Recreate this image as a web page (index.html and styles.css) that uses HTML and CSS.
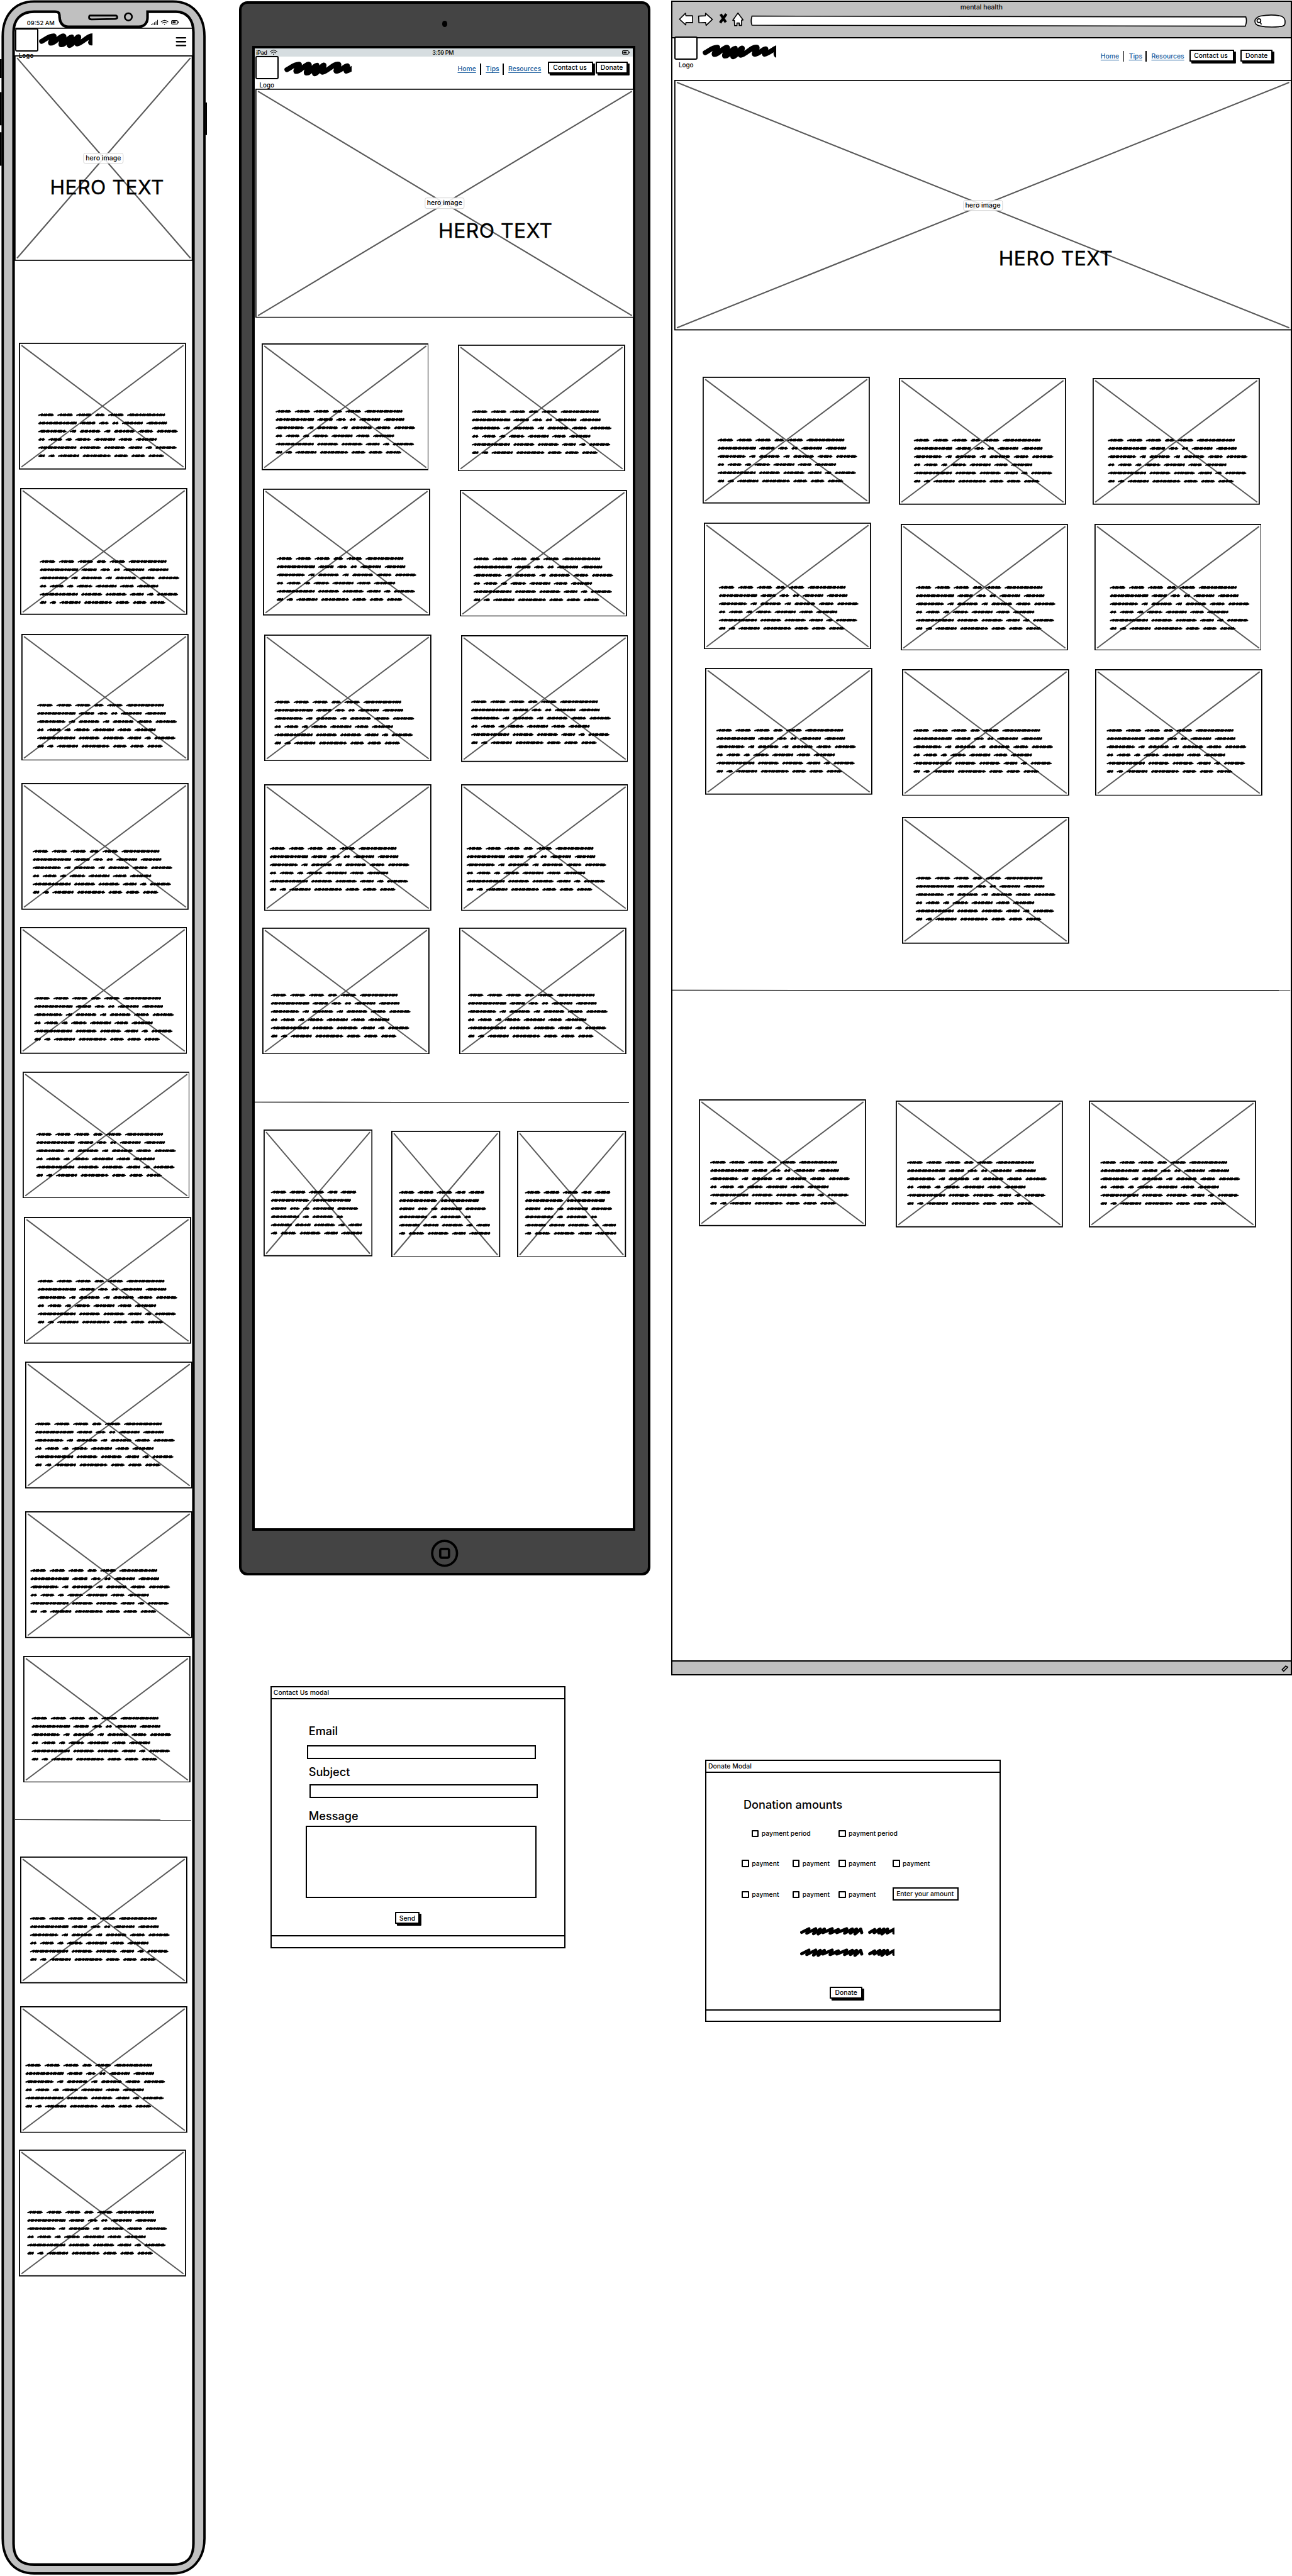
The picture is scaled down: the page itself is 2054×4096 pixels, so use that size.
FILE: index.html
```html
<!DOCTYPE html>
<html lang="en">
<head>
<meta charset="utf-8">
<title>mental health</title>
<link rel="stylesheet" href="styles.css">
</head>
<body>
<svg class="defs" width="0" height="0">
  <defs>
    <path id="scribble" fill="none" stroke="#000" stroke-width="9.5" stroke-linecap="round" stroke-linejoin="round" d="M5 15.5C12 12 20 4 29 5C31 9 20 15 22.500 19C32 19 38 6 47 5C52 7 40 18 42.500 22C52 23 54 8 63 7C64 12 56 20 58.500 23.500C68 22 69 8 76.500 6.500C79 10 70 17 73.500 20.500C84 19 95 3 105 5C108 9 97 15 100 18.500C108 20 114 9 122 8C124 12 117 15 119.500 18.500C130 16 136 8 146 5C146 10 139 15 142.500 20"/>
    <g id="scribble-small" fill="none" stroke="#000" stroke-width="6" stroke-linecap="round" stroke-linejoin="round">
      <path d="M3 10.500L17 3.500L13 12L30 3.500L26 13L39 4L35 13.500L47 4L44 11L62 3.500L58 12L74 5L71 11L90 3.500L86 12L101 4L97 12L109 4L106 13.500L117 4L119 11"/>
      <path d="M134.500 10.500L144 5L143 11L154 4L152 11.500L162 4L158 13.500L169 4L168 11.500L184 3L181 11.500"/>
    </g>
    <g id="wifi" fill="none" stroke="#000" stroke-width="1.300" stroke-linecap="round">
      <path d="M.8 3.800Q7.300-2 13.800 3.800M3.200 6.200Q7.300 2.800 11.400 6.200"/>
      <circle cx="7.300" cy="9" r="1" fill="#000" stroke="none"/>
    </g>
    <g id="battery">
      <rect x=".7" y=".7" width="11.600" height="6.800" rx="1.600" fill="none" stroke="#000" stroke-width="1.300"/>
      <rect x="2.600" y="2.500" width="6" height="3.200" fill="#000"/>
      <path d="M13.800 2.600v3" stroke="#000" stroke-width="1.300"/>
    </g>
  </defs>
</svg>

<main class="board">
  <!-- Phone -->
  <section class="lane lane-phone">
    <div class="phone">
      <svg class="phone-frame" viewBox="0 0 400 4977" width="400" height="4977">
        <path d="M1.500 114v36.500M1.500 178v64M1.500 255.500v64.500M398.500 198v63" stroke="#000" stroke-width="3.500"/>
        <path d="M5.200 70C5.200 30 28 2.800 66 2.800H334C372 2.800 395 30 395 70V4905C395 4946 370 4972.500 334 4972.500H66C28 4972.500 5.200 4946 5.200 4905Z" fill="#c0c0c0" stroke="#000" stroke-width="4.600"/>
        <path d="M26.200 62C26.200 38 40 22.500 66 22.500H106C114 22.500 115 25 115 33C116 44 121 51.500 132 51.500H268C279 51.500 285 44 285 34V22.500H340C361 22.500 373.700 38 373.700 62V4915C373.700 4943 361 4955.500 334 4955.500H66C39 4955.500 26.200 4943 26.200 4915Z" fill="#fff" stroke="#000" stroke-width="5"/>
        <path d="M174 30H223Q227 30 226.500 34Q226 36 222 36.500L177 37.500Q172 37.500 172 34Q172 30 174 30Z" fill="none" stroke="#000" stroke-width="3.400"/>
        <circle cx="248" cy="32.500" r="7" fill="none" stroke="#000" stroke-width="3.200"/>
        <path d="M29 54.400H371" stroke="#000" stroke-width="2"/>
      </svg>
      <div class="phone-status">
        <span class="clock">09:52 AM</span>
        <svg width="54" height="14" viewBox="0 0 54 14">
          <path d="M.8 12v-2M3.800 12v-3.500M6.800 12v-5.500M9.800 12v-7.500M12.800 12v-10" stroke="#000" stroke-width="1.200"/>
          <use href="#wifi" x="19" y="2"/><use href="#battery" x="39" y="2.500"/>
        </svg>
      </div>
      <header class="phone-header">
        <div class="logo"><i class="logo-box"></i><span>Logo</span></div>
        <svg class="brand" width="103" height="30"><use href="#scribble"/></svg>
        <svg class="burger" width="22" height="20"><path d="M2 2.500H19.500M2 10H19.500M2 17.500H19.500" stroke="#000" stroke-width="2.800" stroke-linecap="round"/></svg>
      </header>
      <div class="hero hero-phone">
        <svg width="344.500" height="397" viewBox="0 0 344.500 397"><rect x="1" y="1" width="342.500" height="395"/><path d="M5 5L340 392M340 5L5 392"/></svg>
        <span class="hero-label">hero image</span>
        <h1>HERO TEXT</h1>
      </div>
      <div class="cards" data-cards="phoneTips"></div>
      <svg class="rule rule-phone" width="340" height="2"><path d="M0 .5L340 1.300"/></svg>
      <div class="cards" data-cards="phoneResources"></div>
    </div>
  </section>

  <!-- Tablet and contact modal -->
  <section class="lane lane-tablet">
    <div class="tablet">
      <i class="camera"></i>
      <div class="tablet-screen">
        <div class="tablet-status">
          <span class="left">iPad <svg width="15" height="11"><use href="#wifi"/></svg></span>
          <span>3:59 PM</span>
          <span class="right"><svg width="15" height="9"><use href="#battery"/></svg></span>
        </div>
        <header class="bar bar-tablet">
          <div class="logo"><i class="logo-box"></i><span>Logo</span></div>
          <svg class="brand" width="130" height="30"><use href="#scribble"/></svg>
          <nav class="links"><a>Home</a><i></i><a>Tips</a><i></i><a>Resources</a></nav>
          <button class="btn contact">Contact us</button>
          <button class="btn donate">Donate</button>
        </header>
        <div class="hero hero-tablet">
          <svg width="731.500" height="443" viewBox="0 0 731.500 443"><rect x="1" y="1" width="729.500" height="441"/><path d="M5 5L727.500 438.500M727.500 5L5 438.500"/></svg>
          <span class="hero-label">hero image</span>
          <h1>HERO TEXT</h1>
        </div>
        <div class="columns tablet-tips">
          <div class="cards" data-cards="tabletLeft"></div>
          <div class="cards" data-cards="tabletRight"></div>
        </div>
        <svg class="rule rule-tablet" width="723" height="2"><path d="M0 .5L723 1.500"/></svg>
        <div class="columns tablet-resources">
          <div class="cards" data-cards="tabletR1"></div>
          <div class="cards" data-cards="tabletR2"></div>
          <div class="cards" data-cards="tabletR3"></div>
        </div>
      </div>
      <svg class="home" width="53" height="53"><circle cx="26.500" cy="26.500" r="24" /><rect x="18" y="18" width="17" height="17" rx="3"/></svg>
    </div>

    <form class="modal modal-contact">
      <div class="modal-title">Contact Us modal</div>
      <div class="modal-body">
        <label>Email</label>
        <div class="field field-email"></div>
        <label>Subject</label>
        <div class="field field-subject"></div>
        <label>Message</label>
        <div class="field field-message"></div>
        <button class="btn send" type="button">Send</button>
      </div>
      <div class="modal-foot"></div>
    </form>
  </section>

  <!-- Desktop window and donate modal -->
  <section class="lane lane-desktop">
    <div class="window">
      <div class="chrome">
        <div class="window-title">mental health</div>
        <div class="toolbar">
          <svg class="tools" width="126" height="28" viewBox="0 0 126 28">
            <g fill="#fff" stroke="#000" stroke-width="2" stroke-linejoin="round">
              <path d="M1.500 14L13 2.500L14 7.500H26.500L27 20.500L14 20.500L13.500 25Z"/>
              <path d="M38.500 8L51.500 7.500L52 2.500L65 14.500L53 26L52 20.500L39 21Z"/>
              <path d="M114.500 2L124.500 15.500L121.500 16V26H117V21.500H112.500V26.500H108L107.500 16.500L104.500 16Z"/>
            </g>
            <path d="M81 4.500L91 20M92 4L80 21" stroke="#000" stroke-width="5"/>
          </svg>
          <svg class="url" width="960" height="24"><path d="M3 2L957 3.500Q960 12 956 21.500L3 19.500Q0 12 3 2Z"/></svg>
          <svg class="search" width="61" height="26"><path d="M12 3Q35-1 53 3.500Q60 7 59.500 15Q60 22 53 23Q30 26 10 22Q1 20 1.200 12.500Q2 6 12 3Z"/><circle cx="9" cy="12" r="3.600"/><path d="M11 15L14 19"/></svg>
        </div>
      </div>
      <header class="bar bar-desktop">
        <div class="logo"><i class="logo-box"></i><span>Logo</span></div>
        <svg class="brand" width="142" height="30"><use href="#scribble"/></svg>
        <nav class="links"><a>Home</a><i></i><a>Tips</a><i></i><a>Resources</a></nav>
        <button class="btn contact">Contact us</button>
        <button class="btn donate">Donate</button>
      </header>
      <div class="hero hero-desktop">
        <svg width="1193" height="484" viewBox="0 0 1193 484"><rect x="1" y="1" width="1191" height="482"/><path d="M5 5L1188 479M1188 5L5 479"/></svg>
        <span class="hero-label">hero image</span>
        <h1>HERO TEXT</h1>
      </div>
      <div class="columns desktop-tips">
        <div class="cards" data-cards="desktopLeft"></div>
        <div class="cards" data-cards="desktopMiddle"></div>
        <div class="cards" data-cards="desktopRight"></div>
      </div>
      <svg class="rule rule-desktop" width="1196" height="2"><path d="M0 .5L1196 1.500"/></svg>
      <div class="columns desktop-resources">
        <div class="cards" data-cards="desktopR1"></div>
        <div class="cards" data-cards="desktopR2"></div>
        <div class="cards" data-cards="desktopR3"></div>
      </div>
      <div class="statusbar"><svg width="20" height="20"><path d="M4 12L11 5M7 15L15 7M4 12L7 15M11 5L15 7" stroke="#000" stroke-width="2" stroke-linecap="round"/></svg></div>
    </div>

    <form class="modal modal-donate">
      <div class="modal-title">Donate Modal</div>
      <div class="modal-body">
        <label>Donation amounts</label>
        <div class="checks periods">
          <span class="check"><i></i>payment period</span><span class="check"><i></i>payment period</span>
        </div>
        <div class="checks amounts">
          <span class="check"><i></i>payment</span><span class="check"><i></i>payment</span><span class="check"><i></i>payment</span><span class="check"><i></i>payment</span>
        </div>
        <div class="checks amounts second">
          <span class="check"><i></i>payment</span><span class="check"><i></i>payment</span><span class="check"><i></i>payment</span><div class="field amount">Enter your amount</div>
        </div>
        <svg class="note" width="182" height="17"><use href="#scribble-small"/></svg>
        <svg class="note" width="182" height="17"><use href="#scribble-small"/></svg>
        <button class="btn donate" type="button">Donate</button>
      </div>
      <div class="modal-foot"></div>
    </form>
  </section>
</main>
<script src="script.js"></script>
</body>
</html>
```
FILE: styles.css
```css
* { box-sizing: border-box; }
body { margin: 0; background: #fff; color: #000; font: 500 13px/16px Inter, "Liberation Sans", sans-serif; overflow: hidden; }
svg { display: block; flex: none; }
i { display: block; flex: none; font-style: normal; }
.defs { position: absolute; }

/* The board is laid out in sketch units and scaled as a whole */
.board { zoom: .82292; width: 2496px; height: 4977px; display: flex; overflow: hidden; }
.lane { flex: none; }
.lane-phone { width: 461.500px; }
.lane-tablet { width: 835.500px; padding-top: 3px; }
.lane-desktop { width: 1199px; padding-top: 1px; }

/* Shared pieces */
.logo { width: 45px; text-align: center; }
.logo-box { width: 45px; height: 45px; border: 2.500px solid #000; border-radius: 3px; background: #fff; }
.logo span { display: block; position: relative; z-index: 2; font-size: 12px; line-height: 16px; margin-top: 3px; }
.brand { overflow: hidden; }
.hero { position: relative; }
.hero rect { fill: #fff; stroke: #000; stroke-width: 2.200; }
.hero path { stroke: #5a5a5a; stroke-width: 2.600; }
.hero-label { position: absolute; left: 50%; top: 50%; transform: translate(-50%, -50%); width: 77px; height: 21.500px; border: 1.300px solid #d4d4d4; border-radius: 4px; background: rgba(255,255,255,.87); text-align: center; line-height: 20px; font-size: 12.800px; white-space: nowrap; }
.hero h1 { position: absolute; margin: 0; font-size: 38.500px; line-height: 46px; font-weight: 400; white-space: nowrap; letter-spacing: .7px; -webkit-text-stroke: .5px #000; }
.hero-phone { width: 344.500px; margin-left: 27.500px; }
.hero-phone h1 { left: 69px; top: 231px; }
.hero-tablet { width: 731.500px; margin-left: 1.300px; }
.hero-tablet h1 { left: 354px; top: 252px; }
.hero-desktop { width: 1193px; margin-left: 3px; }
.hero-desktop h1 { left: 627px; top: 321px; }
.columns { display: flex; }
.cards { flex: none; }
.card { display: block; }
.card rect { fill: #fff; stroke: #000; stroke-width: 2.200; }
.card .cross { stroke: #5a5a5a; stroke-width: 2.400; }
.card .copy { fill: none; stroke: #000; stroke-width: 2.700; stroke-linecap: round; stroke-linejoin: round; }
.rule { overflow: visible; }
.rule path { stroke: #000; stroke-width: 1.700; }
.btn { display: block; flex: none; height: 23px; padding: 0; border: 2.500px solid #000; border-radius: 1px; background: #fff; color: #000; box-shadow: 3.500px 3.500px 0 #000; font: 500 12.600px/18px Inter, sans-serif; text-align: center; white-space: nowrap; }
.contact { width: 87px; padding-right: 3px; }
.donate { width: 62.500px; }
.links { display: flex; flex: none; font-size: 12.600px; color: #14599c; }
.links a { text-decoration: underline; text-underline-offset: 2px; }
.links a:nth-of-type(1) { width: 35px; }
.links a:nth-of-type(2) { width: 24px; }
.links a:nth-of-type(3) { width: 64px; }
.links i { width: 2px; height: 21px; margin: -2px 9px 0 8.500px; background: #000; }

/* Phone */
.phone { position: relative; width: 400px; height: 4977px; }
.phone-frame { position: absolute; left: 0; top: 0; }
.phone-status, .phone-header, .phone .hero, .phone .cards, .phone .rule { position: relative; }
.phone-status { height: 54.500px; padding: 36px 0 0 52px; display: flex; }
.phone-status .clock { width: 239.500px; font-size: 11.400px; }
.phone-header { height: 53px; padding-left: 29px; display: flex; z-index: 1; }
.phone-header .brand { margin: 9.500px 0 0 1.500px; }
.phone-header .burger { margin: 16.500px 0 0 160px; }
.phone-header .logo span { margin-top: 0; margin-left: -2px; }
.rule-phone { margin: 72px 0 0 29.500px; }

/* Tablet */
.tablet { width: 795.500px; height: 3041.600px; border: 5px solid #000; border-radius: 16px; background: #444; }
.camera { width: 10.500px; height: 12px; margin: 32px auto 0; border-radius: 50%; background: #000; }
.tablet-screen { width: 740.600px; height: 2868.600px; margin: 37.400px 0 0 20.600px; border: 5px solid #000; background: #fff; }
.tablet-status { height: 15.500px; padding: 0 6px 0 3px; display: grid; grid-template-columns: 1fr auto 1fr; align-items: center; background: #d6dde0; font-size: 11px; line-height: 15px; letter-spacing: -.4px; }
.tablet-status .left { display: flex; gap: 5px; align-items: center; }
.tablet-status .right { justify-self: end; }
.bar { display: flex; }
.bar-tablet { height: 61.300px; padding: 0 0 0 1.300px; }
.bar-tablet .logo { margin-top: -1px; }
.bar-tablet .brand { margin: 9px 0 0 11px; }
.bar-tablet .links { margin: 15.500px 13px 0 205px; }
.bar-tablet .btn { margin-top: 10px; }
.bar-tablet .donate { margin-left: 4.600px; }
.rule-tablet { margin: 92px 0 0; }
.home { margin: 17px auto 0; fill: none; stroke: #000; stroke-width: 4.500; }

/* Desktop window */
.window { width: 1198.500px; height: 3236px; border: 3px solid #000; display: flex; flex-direction: column; }
.chrome { height: 70.500px; background: #c0c0c0; border-bottom: 2.500px solid #000; }
.window-title { height: 20px; padding-top: 3px; text-align: center; font-size: 12.600px; }
.toolbar { display: flex; }
.tools { margin: 0 0 0 11.500px; }
.url { margin: 5.500px 0 0 13px; fill: #fff; stroke: #000; stroke-width: 2; }
.search { margin: 4.500px 0 0 13px; fill: #fff; stroke: #000; stroke-width: 2; }
.bar-desktop { height: 81px; padding-left: 3.500px; }
.bar-desktop .logo { margin-top: -4px; }
.bar-desktop .brand { margin: 12.500px 0 0 9.500px; }
.bar-desktop .links { margin: 26.500px 9px 0 627px; }
.bar-desktop .btn { margin-top: 22px; }
.bar-desktop .donate { margin-left: 12px; }
.rule-desktop { margin: 88.500px 0 0 -3px; }
.statusbar { height: 27px; margin-top: auto; border-top: 2.500px solid #000; background: #c0c0c0; display: flex; justify-content: flex-end; align-items: flex-end; }

/* Modals */
.modal { width: 570.500px; height: 507px; border: 2.600px solid #000; display: flex; flex-direction: column; }
.modal-contact { margin: 212.800px 0 0 61px; }
.modal-donate { margin: 163px 0 0 65.500px; }
.modal-title { height: 23.500px; padding: 3px 0 0 3.500px; border-bottom: 2.500px solid #000; font-size: 12.600px; }
.modal-body { flex: 1; }
.modal-foot { height: 22.500px; border-top: 2.500px solid #000; }
.modal label { display: block; margin-left: 71.500px; font-size: 22px; line-height: 28px; }
.modal-contact label:nth-of-type(1) { margin-top: 48px; }
.modal-contact label:nth-of-type(2) { margin-top: 12px; }
.modal-contact label:nth-of-type(3) { margin-top: 20.500px; }
.field { border: 2.500px solid #000; background: #fff; }
.field-email { width: 441.700px; height: 26px; margin: 13px 0 0 68.500px; }
.field-subject { width: 441.500px; height: 26px; margin: 9.500px 0 0 72.500px; }
.field-message { width: 446px; height: 139px; margin: 6px 0 0 65.500px; }
.send { width: 48px; margin: 27.500px 0 0 238px; }
.modal-donate label { margin-top: 47px; }
.checks { display: flex; }
.check { display: flex; gap: 5.500px; align-items: center; height: 14px; font-size: 12.600px; white-space: nowrap; }
.check i { width: 14px; height: 14px; border: 2.450px solid #000; border-radius: 1.500px; background: #fff; }
.periods { margin: 35px 0 0 87px; }
.periods .check:first-child { width: 168px; }
.amounts { margin: 44px 0 0 68px; }
.amounts .check:nth-child(1) { width: 98px; }
.amounts .check:nth-child(2) { width: 89px; }
.amounts .check:nth-child(3) { width: 104.500px; }
.amounts.second { margin-top: 46px; height: 14px; }
.amount { width: 127.500px; height: 26px; margin-top: -7px; padding-left: 5px; font-size: 12.600px; line-height: 21px; white-space: nowrap; }
.note { margin: 56px 0 0 180.500px; overflow: hidden; }
.note + .note { margin-top: 24px; }
.modal-donate .btn { margin: 57px 0 0 238.500px; }
```
FILE: script.js
```js
// Word extents (start, end) for each line of placeholder copy.
const WIDE = [
  [[0,31],[37,67.7],[73.3,104],[110,129.3],[135,166],[171.7,246]],
  [[0,75.3],[80.3,111.3],[117,137],[142.7,156],[161.7,203],[208.7,249.7]],
  [[0,55.7],[61,74.3],[80,121.3],[127,140.3],[146,187.3],[193,223],[228.7,270.7]],
  [[0,13.7],[19.3,47.3],[52.7,66],[71.3,102.7],[107.7,149.7],[155,182.7],[188,230]],
  [[0,74.7],[80,121.7],[127,169],[174,202],[207.3,221],[226.3,268.3]],
  [[0,13.7],[19.3,32.7],[38,80],[85.7,141],[146.3,174.3],[179.7,207.3],[212.7,243.7]]
];
const NARROW = [
  [[0,31],[36,67.8],[73,103.8],[109,129.7],[134.5,166]],
  [[0,75],[80.5,155.6]],
  [[0,31],[36.5,56.6],[62,75.7],[80.5,122.8],[128,169.4]],
  [[0,55.6],[61.4,74.6],[80,121.2],[126.5,140.3]],
  [[0,41.3],[46.6,77.8],[83,125],[130.2,144],[149.3,176.8]],
  [[0,13.2],[19,49.8],[55.6,97],[102.7,130.2],[135.5,177.3]]
];

// Each card: x, y, x of its copy, y of the first line of copy.
const SETS = {
  phoneTips: { left: 0, top: 504.5, cards: [
    [36.3,662.2,73.3,801.5],[39.3,943.5,76.7,1085.5],[41,1224.7,71,1362.4],[41,1513.4,62.3,1645.4],
    [38.3,1791.8,65,1929.5],[43.3,2070.2,69,2191.3],[46.3,2351.4,72.3,2475.4],[48.3,2631.5,67,2752],
    [48.3,2920.8,58,3035.3],[45.3,3199.2,61,3319.6]] },
  phoneResources: { left: 0, top: 3518.2, cards: [
    [39.3,3587.6,58,3707.3],[39.3,3876.3,49,3990.4],[36.3,4153.7,52,4274.7]] },
  tabletLeft: { left: 492, top: 613.2, span: 392, cards: [
    [505.2,663,531.7,794.3],[508.3,944,534.3,1079],[510.3,1225,529.7,1355.4],[510.3,1514.3,520.5,1638.3],[507.5,1791.6,523.6,1922]] },
  tabletRight: { left: 884, top: 613.2, cards: [
    [884.8,664.8,911.3,794.3],[888.4,945.8,914.4,1079],[890.4,1226.8,909.3,1355.4],[890.4,1514.3,900.6,1638.3],[887.3,1791.6,903.7,1922]] },
  tabletR1: { left: 492, top: 2130.5, span: 250, narrow: true, cards: [[508.8,2182,522.5,2303]] },
  tabletR2: { left: 742, top: 2130.5, span: 250, narrow: true, cards: [[756.5,2184,770.8,2303]] },
  tabletR3: { left: 992, top: 2130.5, narrow: true, cards: [[999.5,2184,1014.3,2303]] },
  desktopLeft: { left: 1300, top: 638.5, span: 430, cards: [
    [1357.7,728,1386.1,850.3],[1360.8,1009.3,1389.2,1134.4],[1363,1290.2,1384.2,1410.8]] },
  desktopMiddle: { left: 1730, top: 638.5, span: 370, cards: [
    [1737.6,730,1766,850.3],[1740.7,1011.5,1769.2,1134.4],[1743,1292.4,1764.5,1410.8],[1743,1578.7,1769,1697]] },
  desktopRight: { left: 2100, top: 638.5, cards: [
    [2111.4,730,2140.6,850.3],[2114.5,1011.5,2143.7,1134.4],[2116.8,1292.4,2138.7,1410.8]] },
  desktopR1: { left: 1300, top: 1914, span: 430, cards: [[1350.8,2123.9,1372.3,2245.6]] },
  desktopR2: { left: 1730, top: 1914, span: 370, cards: [[1730.7,2126,1752.2,2245.6]] },
  desktopR3: { left: 2100, top: 1914, cards: [[2104.5,2126,2126.4,2245.6]] }
};

// A word is a slanted zigzag running from start to end.
const STEPS = [5.4, 3.4, 6, 3.2, 3, 5.6, 3, 6.4];
function word(start, end, y, seed) {
  const last = end - 1.8;
  let x = start + 1.8, n = seed;
  let d = `M${x} ${y + 0.8}`;
  while (x < end - 5) {
    const peak = Math.min(x + STEPS[n++ % STEPS.length], last);
    d += `L${peak} ${y - 1.5}L${peak - 1.6} ${y + 1.5}`;
    x = peak - 0.4;
  }
  return d + `L${last} ${y + 0.3}`;
}
function copy(lines) {
  return lines.map((words, row) =>
    words.map(([a, b]) => word(a, b, row * 15.83, Math.round(b - a) + row)).join('')).join('');
}
const COPY = { wide: copy(WIDE), narrow: copy(NARROW) };
const H = 245;

document.querySelectorAll('[data-cards]').forEach(el => {
  const set = SETS[el.dataset.cards];
  const w = set.narrow ? 210.5 : 323;
  if (set.span) el.style.width = set.span + 'px';
  let bottom = set.top;
  el.innerHTML = set.cards.map(([x, y, tx, ty]) => {
    const style = `margin:${y - bottom}px 0 0 ${x - set.left}px`;
    bottom = y + H;
    return `<svg class="card" style="${style}" width="${w}" height="${H}" viewBox="0 0 ${w} ${H}">` +
      `<rect x="1.1" y="1.1" width="${w - 2.2}" height="${H - 2.2}"/>` +
      `<path class="cross" d="M5 5L${w - 5} ${H - 5}M${w - 5} 5L5 ${H - 5}"/>` +
      `<path class="copy" transform="translate(${tx - x} ${ty - y})" d="${set.narrow ? COPY.narrow : COPY.wide}"/></svg>`;
  }).join('');
});
```
